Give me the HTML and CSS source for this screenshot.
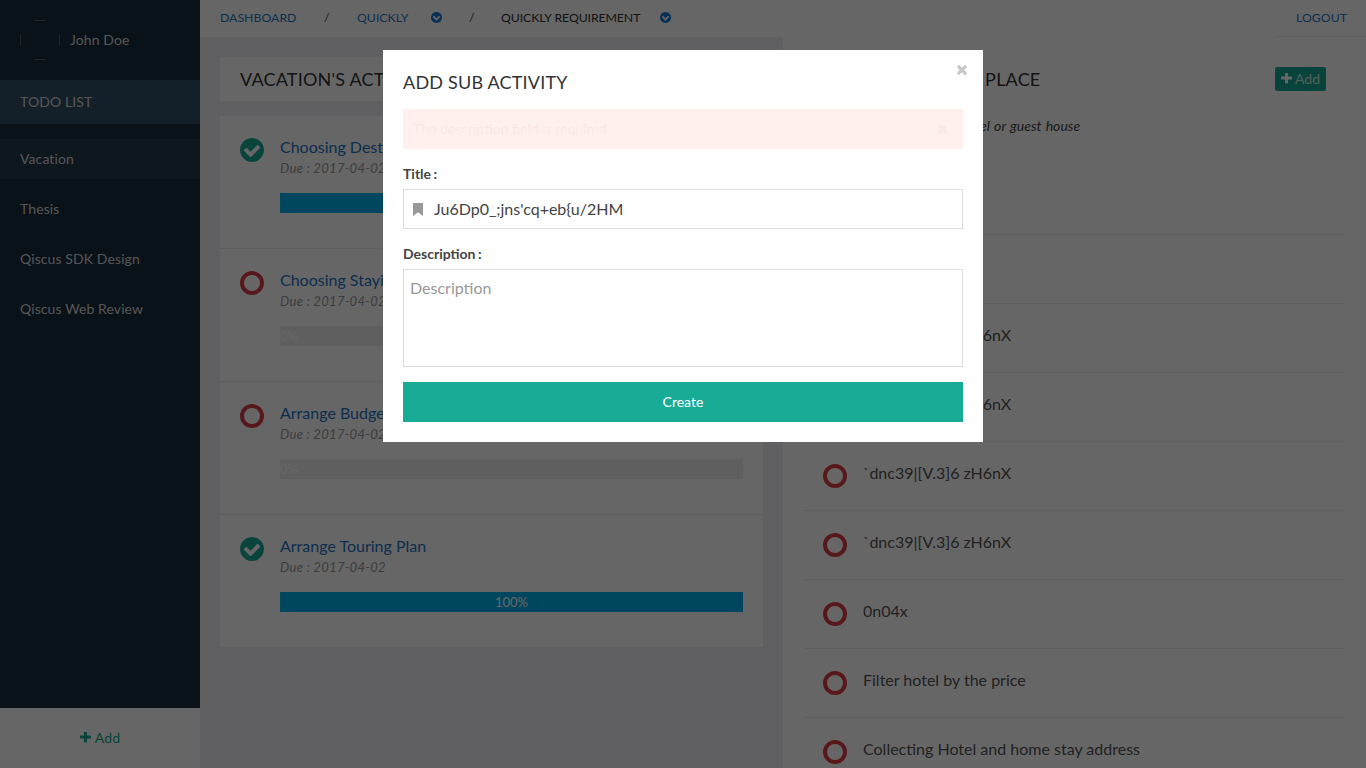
FILE: index.html
```html
<!DOCTYPE html>
<html lang="en">
<head>
  <meta charset="UTF-8" />
  <title>Todo List</title>
  <link rel="stylesheet" href="styles.css">
</head>
<body>
  <svg class="icon-defs" width="0" height="0">
    <symbol id="i-check" viewBox="128 128 1536 1536"><path d="M1412 734q0-28-18-46l-91-90q-19-19-45-19t-45 19l-408 407-226-226q-19-19-45-19t-45 19l-91 90q-18 18-18 46 0 27 18 45l362 362q19 19 45 19 27 0 46-19l543-543q18-18 18-45zm252 162q0 209-103 385.5t-279.5 279.5-385.5 103-385.5-103-279.5-279.5-103-385.5 103-385.5 279.5-279.5 385.5-103 385.5 103 279.5 279.5 103 385.5z"/></symbol>
    <symbol id="i-chevron" viewBox="128 128 1536 1536"><path d="M941 1330l454-454q19-19 19-45t-19-45l-102-102q-19-19-45-19t-45 19l-307 307-307-307q-19-19-45-19t-45 19l-102 102q-19 19-19 45t19 45l454 454q19 19 45 19t45-19zm723-434q0 209-103 385.5t-279.5 279.5-385.5 103-385.5-103-279.5-279.5-103-385.5 103-385.5 279.5-279.5 385.5-103 385.5 103 279.5 279.5 103 385.5z"/></symbol>
    <symbol id="i-plus" viewBox="0 0 1408 1408"><path transform="translate(-192 -192)" d="M1600 736v192q0 40-28 68t-68 28h-416v416q0 40-28 68t-68 28h-192q-40 0-68-28t-28-68v-416h-416q-40 0-68-28t-28-68v-192q0-40 28-68t68-28h416v-416q0-40 28-68t68-28h192q40 0 68 28t28 68v416h416q40 0 68 28t28 68z"/></symbol>
    <symbol id="i-times" viewBox="0 0 1188 1188"><path transform="translate(-302 -366)" d="M1490 1322q0 40-28 68l-136 136q-28 28-68 28t-68-28l-294-294-294 294q-28 28-68 28t-68-28l-136-136q-28-28-28-68t28-68l294-294-294-294q-28-28-28-68t28-68l136-136q28-28 68-28t68 28l294 294 294-294q28-28 68-28t68 28l136 136q28 28 28 68t-28 68l-294 294 294 294q28 28 28 68z"/></symbol>
  </svg>

  <div class="app">
    <aside class="sidebar">
      <div class="profile">
        <svg class="avatar" viewBox="0 0 40 40" width="40" height="40">
          <path d="M15 .5h10M15 39.5h10M.5 15v10M39.5 15v10" />
        </svg>
        <span>John Doe</span>
      </div>
      <div class="side-heading">TODO LIST</div>
      <ul class="side-list">
        <li class="active">Vacation</li>
        <li>Thesis</li>
        <li>Qiscus SDK Design</li>
        <li>Qiscus Web Review</li>
      </ul>
      <a class="side-add"><svg class="plus"><use href="#i-plus"/></svg> Add</a>
    </aside>

    <div class="content">
      <nav class="topbar">
        <a>Dashboard</a>
        <span class="sep">/</span>
        <a>Quickly</a>
        <svg class="crumb-icon"><use href="#i-chevron"/></svg>
        <span class="sep">/</span>
        <a class="current">Quickly Requirement</a>
        <svg class="crumb-icon"><use href="#i-chevron"/></svg>
        <a class="logout">Logout</a>
      </nav>

      <div class="columns">
        <section class="col-left">
          <h2 class="col-title">VACATION'S ACTIVITY</h2>
          <div class="activity-list">
            <div class="activity">
              <svg class="status done"><use href="#i-check"/></svg>
              <div class="activity-body">
                <a class="activity-name">Choosing Destination</a>
                <p class="due">Due : 2017-04-02</p>
                <div class="bar"><div class="bar-fill" style="width: 100%">100%</div></div>
              </div>
            </div>
            <div class="activity">
              <span class="status open"></span>
              <div class="activity-body">
                <a class="activity-name">Choosing Staying Place</a>
                <p class="due">Due : 2017-04-02</p>
                <div class="bar"><div class="bar-fill" style="width: 0">0%</div></div>
              </div>
            </div>
            <div class="activity">
              <span class="status open"></span>
              <div class="activity-body">
                <a class="activity-name">Arrange Budget</a>
                <p class="due">Due : 2017-04-02</p>
                <div class="bar"><div class="bar-fill" style="width: 0">0%</div></div>
              </div>
            </div>
            <div class="activity">
              <svg class="status done"><use href="#i-check"/></svg>
              <div class="activity-body">
                <a class="activity-name">Arrange Touring Plan</a>
                <p class="due">Due : 2017-04-02</p>
                <div class="bar"><div class="bar-fill" style="width: 100%">100%</div></div>
              </div>
            </div>
          </div>
        </section>

        <section class="col-right">
          <div class="right-head">
            <h2>CHOOSING STAYING PLACE</h2>
            <a class="btn-add"><svg class="plus"><use href="#i-plus"/></svg> Add</a>
          </div>
          <p class="right-desc">Find a place to stay, like a hotel or guest house</p>
          <ul class="sub-list">
            <li><span class="status open"></span><span>Search hotel</span></li>
            <li><span class="status open"></span><span>0n04x</span></li>
            <li><span class="status open"></span><span>`dnc39|[V.3]6 zH6nX</span></li>
            <li><span class="status open"></span><span>`dnc39|[V.3]6 zH6nX</span></li>
            <li><span class="status open"></span><span>`dnc39|[V.3]6 zH6nX</span></li>
            <li><span class="status open"></span><span>`dnc39|[V.3]6 zH6nX</span></li>
            <li><span class="status open"></span><span>0n04x</span></li>
            <li><span class="status open"></span><span>Filter hotel by the price</span></li>
            <li><span class="status open"></span><span>Collecting Hotel and home stay address</span></li>
          </ul>
        </section>
      </div>
    </div>
  </div>

  <div class="overlay">
    <div class="modal">
      <svg class="modal-close"><use href="#i-times"/></svg>
      <h3>ADD SUB ACTIVITY</h3>
      <div class="alert">
        <span>The description field is required.</span>
        <svg class="alert-close"><use href="#i-times"/></svg>
      </div>
      <label for="title">Title :</label>
      <div class="input-wrap">
        <svg class="bookmark" viewBox="0 0 10 13"><path d="M0 0h10v13L5 9.2 0 13z"/></svg>
        <input type="text" id="title" value="Ju6Dp0_;jns'cq+eb{u/2HM" />
      </div>
      <label for="description">Description :</label>
      <textarea id="description" placeholder="Description"></textarea>
      <button class="btn-create">Create</button>
    </div>
  </div>
</body>
</html>
```
FILE: styles.css
```css
/* Reset and base */
* {
  box-sizing: border-box;
  margin: 0;
  padding: 0;
}

body {
  font-family: Lato, "Open Sans", sans-serif;
  font-size: 14px;
  color: #444;
  height: 768px;
  overflow: hidden;
  position: relative;
}

ul {
  list-style: none;
}

.icon-defs {
  position: absolute;
}

.app {
  display: flex;
  height: 768px;
}

/* Sidebar */
.sidebar {
  width: 200px;
  flex: none;
  background: #1a2e3f;
  color: #d5d5d5;
  letter-spacing: 0.1px;
  display: flex;
  flex-direction: column;
}

.profile {
  display: flex;
  align-items: center;
  gap: 10px;
  height: 80px;
  padding-left: 20px;
}

.profile span {
  margin-bottom: 2px;
}

.avatar {
  fill: none;
  stroke: #5c5c5c;
  stroke-width: 1;
}

.side-heading {
  height: 44px;
  line-height: 44px;
  padding-left: 20px;
  background: #345168;
}

.side-list {
  margin-top: 15px;
  flex: 1;
  display: flex;
  flex-direction: column;
  gap: 10px;
}

.side-list li {
  height: 40px;
  line-height: 40px;
  padding-left: 20px;
}

.side-list .active {
  background: #233a4d;
}

.side-add {
  height: 60px;
  padding-bottom: 2px;
  background: #fff;
  color: #18ab96;
  display: flex;
  align-items: center;
  justify-content: center;
  gap: 4px;
}

.plus {
  width: 11px;
  height: 11px;
  fill: currentColor;
}

/* Top bar */
.content {
  flex: 1;
  display: flex;
  flex-direction: column;
  min-width: 0;
}

.topbar {
  height: 37px;
  flex: none;
  background: #fff;
  display: flex;
  align-items: center;
  gap: 27.5px;
  padding-left: 20px;
  font-size: 12.3px;
  text-transform: uppercase;
}

.topbar a,
.topbar .sep {
  margin-bottom: 3px;
}

.topbar a {
  color: #2a78c0;
}

.topbar .current {
  color: #333;
  margin: 0 -2px 3px -1px;
  letter-spacing: -0.1px;
}

.crumb-icon {
  width: 11px;
  height: 11px;
  margin: 0 0 2px -5.5px;
  fill: #1a78d0;
}

.topbar .logout {
  margin: 0 0 0 auto;
  align-self: stretch;
  display: flex;
  align-items: center;
  padding: 0 19px 1px 20px;
  border-bottom: 1px solid #eee;
}

/* Columns */
.columns {
  flex: 1;
  display: flex;
  min-height: 0;
}

.col-left {
  width: 583px;
  flex: none;
  background: #f0f1f4;
  padding: 20px;
}

.col-title {
  height: 44px;
  line-height: 44px;
  padding-left: 20px;
  background: #fff;
  font-size: 18px;
  font-weight: 400;
  letter-spacing: 0.2px;
  color: #333;
}

.activity-list {
  margin-top: 15px;
  background: #fff;
}

.activity {
  display: flex;
  gap: 16px;
  height: 133px;
  padding: 22px 20px 0;
  border-bottom: 1px solid #eee;
}

.activity:last-child {
  height: 132px;
  border-bottom: none;
}

.status {
  width: 24px;
  height: 24px;
  flex: none;
}

.status.done {
  fill: #18ab96;
}

.status.open {
  border: 4px solid #dc3e45;
  border-radius: 50%;
}

.activity-body {
  flex: 1;
  min-width: 0;
  margin-top: -1px;
}

.activity-name {
  display: block;
  font-size: 16px;
  line-height: 19px;
  color: #2474c4;
}

.due {
  font-size: 13px;
  line-height: 16px;
  margin-top: 4px;
  font-style: italic;
  letter-spacing: 0.3px;
  color: #999;
}

.bar {
  margin-top: 17px;
  height: 20px;
  background: #eee;
}

.bar-fill {
  height: 20px;
  line-height: 20px;
  font-size: 13px;
  text-align: center;
  color: #fff;
  background: #00b0ec;
  white-space: nowrap;
}

/* Right column */
.col-right {
  flex: 1;
  background: #fff;
  padding: 0 21px 0 20px;
}

.right-head {
  display: flex;
  align-items: center;
  justify-content: space-between;
  padding: 30px 19px 0 0;
}

.right-head h2 {
  font-size: 18px;
  font-weight: 400;
  letter-spacing: 0.2px;
  color: #333;
}

.btn-add {
  width: 51px;
  height: 24px;
  padding-bottom: 2px;
  border-radius: 2px;
  background: #18ab96;
  color: #cfe8e3;
  display: flex;
  align-items: center;
  justify-content: center;
  gap: 3px;
}

.btn-add .plus {
  fill: #fff;
}

.right-desc {
  margin-top: 26px;
  font-size: 14px;
  line-height: 18px;
  font-style: italic;
  word-spacing: 0.9px;
  color: #444;
}

.sub-list {
  margin-top: 31px;
}

.sub-list li {
  display: flex;
  align-items: flex-start;
  gap: 16px;
  height: 69px;
  padding: 21px 0 0 20px;
  font-size: 16px;
  line-height: 20px;
  color: #555;
  border-bottom: 1px solid #eee;
}

.sub-list .status {
  margin-top: 1px;
}

/* Modal */
.overlay {
  position: absolute;
  inset: 0;
  background: rgba(0, 0, 0, 0.6);
  display: flex;
  justify-content: center;
  align-items: flex-start;
  padding-top: 50px;
}

.modal {
  position: relative;
  width: 600px;
  height: 392px;
  background: #fff;
  padding: 20px;
}

.modal-close {
  position: absolute;
  top: 15px;
  right: 16px;
  width: 10px;
  height: 10px;
  fill: #c8c8c8;
}

.modal h3 {
  font-size: 18px;
  font-weight: 400;
  line-height: 24px;
  letter-spacing: 0.2px;
  color: #333;
}

.alert {
  margin-top: 15px;
  height: 40px;
  padding: 0 16px 0 10px;
  background: #fff0ee;
  color: #fde7e4;
  display: flex;
  align-items: center;
  justify-content: space-between;
}

.alert span {
  margin-bottom: 2px;
}

.alert-close {
  width: 9px;
  height: 9px;
  fill: #fde6e3;
}

.modal label {
  display: block;
  margin-top: 16px;
  font-size: 14px;
  font-weight: 700;
  line-height: 18px;
  word-spacing: -1px;
  color: #444;
}

.input-wrap {
  margin-top: 6px;
  height: 40px;
  border: 1px solid #ddd;
  display: flex;
  align-items: center;
  gap: 11px;
  padding-left: 9px;
}

.bookmark {
  width: 10px;
  height: 13px;
  fill: #999;
}

.input-wrap input {
  flex: 1;
  border: none;
  outline: none;
  padding-bottom: 2px;
  font: 16px Lato, sans-serif;
  color: #444;
}

.modal textarea {
  display: block;
  margin-top: 6px;
  width: 100%;
  height: 98px;
  border: 1px solid #ddd;
  padding: 8px 6px;
  font: 16px Lato, sans-serif;
  color: #444;
  resize: none;
  outline: none;
}

.modal textarea::placeholder {
  color: #999;
}

.btn-create {
  display: block;
  margin-top: 15px;
  width: 100%;
  height: 40px;
  padding-bottom: 2px;
  border: none;
  background: #18ab96;
  color: #fff;
  font: 14px Lato, sans-serif;
}
```
